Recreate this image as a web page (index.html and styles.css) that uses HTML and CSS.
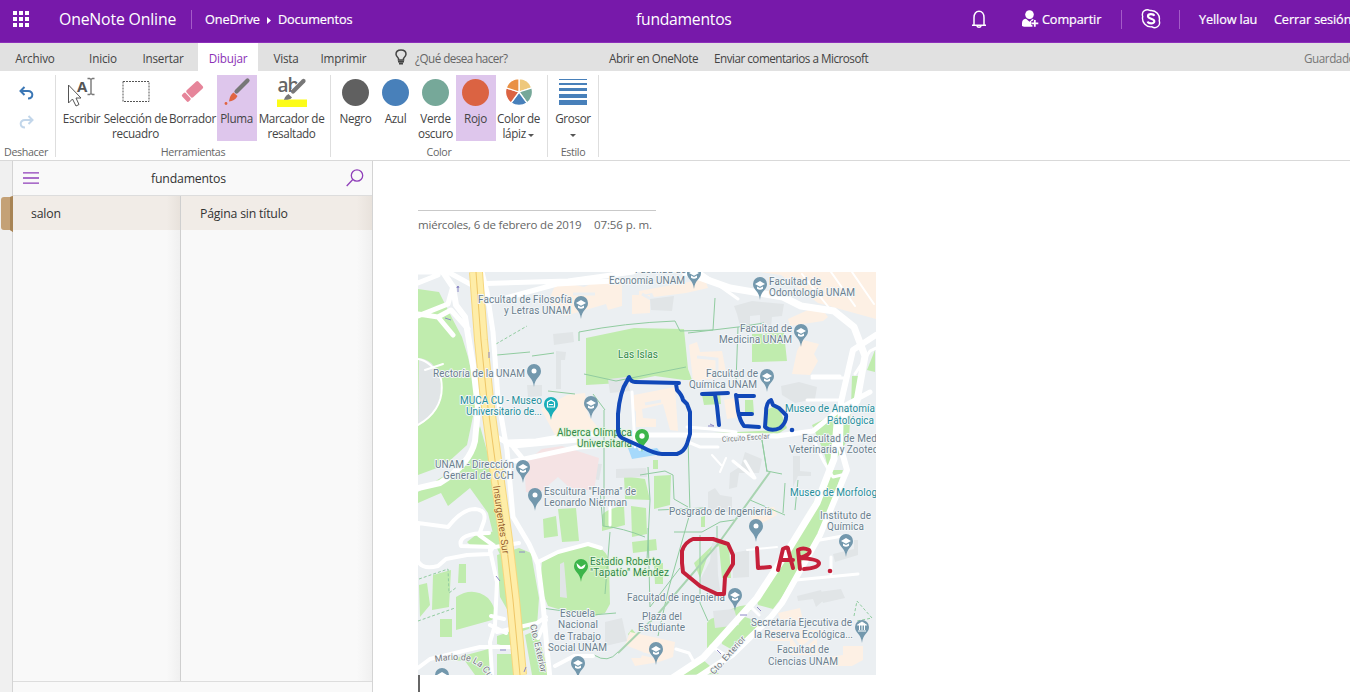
FILE: index.html
```html
<!DOCTYPE html>
<html lang="es">
<head>
<meta charset="utf-8">
<title>OneNote Online</title>
<link rel="stylesheet" href="styles.css">
</head>
<body>
<header class="topbar">
  <svg class="waffle" width="16" height="16" viewBox="0 0 16 16" fill="#fff"><path d="M0 0h4v4H0zM6 0h4v4H6zM12 0h4v4h-4zM0 6h4v4H0zM6 6h4v4H6zM12 6h4v4h-4zM0 12h4v4H0zM6 12h4v4H6zM12 12h4v4h-4z"/></svg>
  <span class="brand">OneNote Online</span>
  <i class="bar-sep"></i>
  <span class="crumb drive">OneDrive</span>
  <svg class="crumb-arrow" width="4" height="7" viewBox="0 0 4 7"><path d="M0 0l4 3.5L0 7z" fill="#fff"/></svg>
  <span class="crumb docs">Documentos</span>
  <span class="doc-title">fundamentos</span>
  <svg class="bell" width="16" height="19" viewBox="0 0 16 19" fill="none" stroke="#fff" stroke-width="1.5"><path d="M1 15.2h14M3 15V7.5C3 3.8 5 1.2 8 1.2s5 2.6 5 6.3V15M6 15.8c.3 1.8 3.700 1.800 4 0"/></svg>
  <svg class="person" width="17" height="18" viewBox="0 0 17 18"><circle cx="7.500" cy="4.600" r="4.300" fill="#fff"/><path d="M0 16v-3c0-3 2-4.300 4-4.300l3.500 3 3-3 2 1-2 3v4.100H2z" fill="#fff"/><path d="M12.800 9.500v7M9.300 13h7" stroke="#7719aa" stroke-width="4"/><path d="M12.800 10v6.800M9.500 13.400h6.800" stroke="#fff" stroke-width="1.800"/></svg>
  <span class="crumb share">Compartir</span>
  <i class="bar-sep"></i>
  <svg class="skype" width="20" height="20" viewBox="0 0 20 20" fill="none" stroke="#fff"><path d="M9 1.500C5.500-.5 0 2 1.700 7.500 .5 13 5 18.500 11 17.800c4 2.500 9-1.300 7.200-6C19.500 6 15 .8 9 1.500z" stroke-width="1.400"/><path d="M13.200 6.800C12.500 4.700 7 4.400 7 7.300c0 3 6.300 1.800 6.300 4.900 0 3-6 2.700-6.600.2" stroke-width="2.200"/></svg>
  <i class="bar-sep second"></i>
  <span class="crumb user">Yellow lau</span>
  <span class="crumb logout">Cerrar sesión</span>
</header>
<nav class="tabs">
  <span class="tab archivo">Archivo</span><span class="tab inicio">Inicio</span><span class="tab insertar">Insertar</span><span class="tab dibujar">Dibujar</span><span class="tab vista">Vista</span><span class="tab imprimir">Imprimir</span>
  <svg class="bulb" width="12" height="16" viewBox="0 0 12 16" fill="none" stroke="#444"><path d="M3.500 11V9.500C2 8 1 7 1 5.300 1 2.600 3.200 1 6 1s5 1.600 5 4.300C11 7 10 8 8.500 9.500V11z" stroke-width="1.500"/><path d="M3 12.700h6M4 14.700h4" stroke-width="1.700"/></svg>
  <span class="tell">¿Qué desea hacer?</span>
  <i class="tab-sep"></i>
  <span class="open">Abrir en OneNote</span>
  <span class="feedback">Enviar comentarios a Microsoft</span>
  <span class="saved">Guardado</span>
</nav>
<section class="ribbon">
  <div class="group undo">
    <div class="history">
      <svg width="15" height="14" viewBox="0 0 15 14" fill="none" stroke="#3b77b5" stroke-width="2"><path d="M5.500 1L1.500 5l4 4M2 5h7c6 0 5.500 7.500 0 7.500"/></svg>
      <svg width="15" height="14" viewBox="0 0 15 14" fill="none" stroke="#c2d6ea" stroke-width="2"><path d="M9.500 1l4 4-4 4M13 5H6c-6 0-5.500 7.500 0 7.500"/></svg>
    </div>
    <div class="caption">Deshacer</div>
  </div>
  <div class="group tools">
    <div class="buttons">
      <div class="btn w42"><svg class="type-icon" width="30" height="30" viewBox="0 0 30 30"><path d="M1.500 8v18l4-4 3.500 7 3-1.500-3-6.500h5z" fill="#fff" stroke="#555"/><text x="10" y="15" class="glyph-a">A</text><path d="M20.500 1.500h2l1.500 1 1.500-1h2M20.500 17.500h2l1.500-1 1.500 1h2M24 2.500v14" fill="none" stroke="#777" stroke-width="1.400"/></svg><span>Escribir</span></div>
      <div class="btn w66"><svg width="28" height="30" viewBox="0 0 28 30"><rect x="1" y="4.500" width="26" height="20" fill="none" stroke="#555" stroke-width="1" stroke-dasharray="2 1"/></svg><span>Selección de<br>recuadro</span></div>
      <div class="btn w48"><svg width="28" height="30" viewBox="0 0 28 30"><g transform="rotate(-43 14 15)" fill="#e6859a"><rect x="9" y="9.500" width="16" height="9.500" rx="1.500"/><rect x="3" y="9.500" width="5" height="9.500" rx="1.500"/></g></svg><span>Borrador</span></div>
      <div class="btn w40 active"><svg width="28" height="30" viewBox="0 0 28 30"><path d="M13.500 14.500L24.500 3.500" stroke="#777" stroke-width="4.200" stroke-linecap="round"/><path d="M10.500 15.500l4 3.500c-2 4-5 5-8.500 5.500 1-4 1-6.500 4.500-9z" fill="#e06542"/><circle cx="3" cy="26.500" r="1.400" fill="#e06542"/></svg><span>Pluma</span></div>
      <div class="btn w70"><svg width="32" height="30" viewBox="0 0 32 30"><rect x="1" y="22.500" width="30" height="7.500" fill="#fcfc18"/><text x="1.500" y="14.500" class="glyph-ab">ab</text><path d="M17 14.500L27.500 4" stroke="#fff" stroke-width="6"/><path d="M17 14.500L27.500 4" stroke="#777" stroke-width="4.200" stroke-linecap="round"/><path d="M12.500 17l3.500 3.500c-2 2.500-5 2-8 2.500 1-3 1.500-4 4.500-6z" fill="#777"/></svg><span>Marcador de<br>resaltado</span></div>
    </div>
    <div class="caption">Herramientas</div>
  </div>
  <div class="group colors">
    <div class="buttons">
      <div class="btn w40"><i class="dot negro"></i><span>Negro</span></div>
      <div class="btn w40"><i class="dot azul"></i><span>Azul</span></div>
      <div class="btn w40"><i class="dot verde"></i><span>Verde<br>oscuro</span></div>
      <div class="btn w40 active"><i class="dot rojo"></i><span>Rojo</span></div>
      <div class="btn w46"><svg width="28" height="30" viewBox="-14 -15 28 30" stroke="#fff" stroke-width="1.300"><path d="M0 0V-13.500A13.500 13.500 0 0 1 12.840-4.170z" fill="#eec87c"/><path d="M0 0L12.840-4.170A13.500 13.500 0 0 1 7.940 10.920z" fill="#76a899"/><path d="M0 0L7.940 10.920A13.500 13.500 0 0 1-7.940 10.920z" fill="#4880ba"/><path d="M0 0L-7.940 10.920A13.500 13.500 0 0 1-12.840-4.170z" fill="#db6342"/><path d="M0 0L-12.840-4.170A13.500 13.500 0 0 1 0-13.500z" fill="#e99145"/></svg><span>Color de<br>lápiz <b class="caret"></b></span></div>
    </div>
    <div class="caption">Color</div>
  </div>
  <div class="group style">
    <div class="buttons">
      <div class="btn w50"><svg width="28" height="30" viewBox="0 0 28 30" fill="#4880ba"><path d="M0 2h28v1H0zM0 6h28v2H0zM0 11h28v3H0zM0 17h28v4H0zM0 23h28v5H0z"/></svg><span>Grosor<br><b class="caret"></b></span></div>
    </div>
    <div class="caption">Estilo</div>
  </div>
</section>
<main class="workspace">
  <div class="edge"><svg class="section-mark" width="13" height="36" viewBox="0 0 13 36"><path d="M4 1h6l3-1v36l-3-2H4q-3 0-3-3V4q0-3 3-3z" fill="#c4a176"/><path d="M10 1l3-1v36l-3-2z" fill="#a88455"/></svg></div>
  <aside class="panel">
    <div class="panel-head">
      <svg width="16" height="12" viewBox="0 0 16 12"><path d="M0 .8h16M0 6h16M0 11.200h16" stroke="#8f3fb9" stroke-width="1.300"/></svg>
      <span>fundamentos</span>
      <svg width="18" height="18" viewBox="0 0 18 18" fill="none" stroke="#8f3fb9" stroke-width="1.300"><circle cx="11" cy="6.500" r="5.700"/><path d="M6.800 10.500L.7 17"/></svg>
    </div>
    <div class="columns">
      <div class="col sections"><div class="entry"><span>salon</span></div></div>
      <div class="col pages"><div class="entry"><span>Página sin título</span></div></div>
    </div>
  </aside>
  <article class="page">
    <div class="page-title"></div>
    <div class="stamp"><span class="date">miércoles, 6 de febrero de 2019</span><span class="time">07:56 p. m.</span></div>
    <svg class="map" width="458" height="403" viewBox="418 272 458 403">
      <defs>
        <g id="pin"><path d="M0 9C-1-1-7-.5-7-7A7 7 0 0 1 7-7C7-.5 1-1 0 9z"/></g>
        <g id="cap"><use href="#pin" fill="#7398ad"/><path d="M-5-7l5-3 5 3-5 2.700zM-3-4.600v2.300q3 2 6 0v-2.300L0-3z" fill="#fff"/></g>
        <g id="place"><use href="#pin" fill="#7398ad"/><circle cy="-7" r="2.500" fill="#fff"/></g>
      </defs>
      <rect x="418" y="272" width="458" height="403" fill="#ebeff2"/>
      <g fill="#c0ecae">
        <path d="M418 289l21 3 14 28 9 17 6 20 9 40-10 48-22 20-27 10z"/>
        <path d="M418 492l48-30 14-36 14 50 16 100-14-30-8-33-18-25-22 18-7-13-23 10z"/>
        <path d="M467 542l10-8 20-3 3 12-28 4zM497 555l22-7 12 5 8 45-2 28-17 6-20-35z"/>
        <path d="M419 585l8-2 3 22-10 12zM433 575l18-5-2 37-17 3zM459 564h7v19h-8zM456 597q17-11 32 1 11 13 4 22l-36 10zM440 619h12v18h-12z"/>
        <path d="M497 636l12-4 3 16-15-4zM448 660l44-12v27h-17l-10-14zM497 654h16l3 21h-19zM525 635l12-5 12 45h-17z"/>
        <path d="M586 338l48-10 50 1 4 40 4 11h-8l-29-4-34 7-35 2z"/>
        <path d="M542 561q27-19 52-15 15 4 15 19l1 39-5 9-17 5-40-12-8-20z"/>
        <path d="M543 519l13-3 2 20-14 2zM558 509l18-1 3 33-17 1zM602 515q6-7 22-9l1 19-23 6zM624 476l21 3 5 21-25-1zM631 506l15 2 1 26-15 3zM654 476l17-1-1 30-16 4zM632 542l24-3 1 11-24 3zM701 517l4-1v11h-4zM653 460h5v9h-5zM654 564l9-1v21h-8z"/>
        <path d="M752 334l32-1 3 28-35 1zM763 309h9v5h-9zM875 350v22l-8-2zM852 376h6l-1 30h-6zM702 395l18-2 1 11-17 1zM745 400h8l1 14-9 2zM766 410l12-5 9 23-9 6-11-2zM690 434l47-2 40-2-5 4-70 3z"/>
        <path d="M812 425l39-19-2 31-20 35-5-20zM832 470h11l-23 63-38 64-9 12-15-4-2-8 41-66zM707 623q4-7 15-5 8-12 25-13l4 5-44 39zM720 634l25-17 18 6-27 29-14-8zM679 675l22-17 18 16zM694 563l23-22 12 5 2 32h-9l-3-32-10 6-9 26zM628 634l4-5 6 7-7 3z"/>
      </g>
      <g fill="#fdf0e4">
        <path d="M760 272h116v47l-58-16-37-28zM554 288l8-6 22 5 16-7 22 1v25l-14 4-2-6-41 12-17-14zM639 291l66-12 3 9-22 5-32 4-2-4-13 3zM632 295l18 0v18l-18 1zM689 345l8-3 3 10 22-1 5 26-34 4zM788 319l31-14 9 12-5 4-33 5zM797 351l6-11 16 4-5 10 4 7-8 14-18-1z"/>
        <path d="M541 409l26-14 18-2 3 22 12 15-30 8-15-3zM634 395l41-8 3 44-8-1-7-26-21 5 1 9 13 1v8h-20v-15l-3-6zM724 400l14-3 3 20-14 2zM750 510l24-3 3 8-17 9-8-4z"/>
        <path d="M778 613l22-5 3 12-22 2zM770 630h55v8h-8v17h-27v-14h-20zM625 645l5-13 23 5 22 5-2 15-14 5-24 4-4-8h10l2-6zM843 646h20v14l-11 6h-29v-8l20-3z"/>
      </g>
      <g fill="none" stroke="#ebeff2" stroke-width="3"><path d="M573 294h22M642 294l14 8M697 357l20 2v14M645 404l16-3M639 653l17 4M789 632l12 17 13-11"/></g>
      <g fill="#e1e5e7">
        <path d="M734 306l18-5 32 3-2 12-10 1-1 10-11 1v-13l-10 1v13l-9 1-4-16zM553 334l20-2 1 10-20 3zM556 351l10 1-1 8h-4v29h-5zM608 379l19-2 3 14-20 2zM419 358q20 2 22 30-1 26-23 38zM650 299l24-3-2 15-21-1zM527 385h15v11l-14 1zM730 473l11-7 4-14 17 7-3 14-20 0-2 14-8 2zM781 386l18-4 18 5-2 12-20 4-13-8zM793 456h7v15l11 1v4h-13l-5 11zM708 492l7-4 5 7 12 2v15h-24z"/>
        <path d="M700 580l10-19 2-18h5l1 32 2 15-9 6-9-9zM732 553l17-3v27l-16 1zM713 611l21-2 5 16-24 3zM797 596l24-6 3 10-8 7-3-8-15 2zM819 592l22-3 4 9-22 5zM833 554l21-5v-9h4v15l-23 7z"/>
        <path d="M560 564l4-2 3 36-7-1zM605 622l17-4 5 23-22 5zM616 469l30-1 1 9-31 1zM571 468l13-5 18 1-3 16-28-4z"/>
      </g>
      <path d="M524 463l18-14 20-3 37 12-5 33-24-3-12-11-20 17-12-2z" fill="#f5e3e4"/>
      <path d="M628 448l8-3 3 6 18-3 5 6-30 5z" fill="#a6d9fb"/>
      <g fill="none" stroke="#91cca0" stroke-width="1">
        <path d="M497 355l33-3M532 356l22-3M579 341v-9q45-9 96-11l5 10 33-1 2-32M584 374l32 7 70-14M688 333l50-6 26-4M738 327l-2 55M575 394l-27-3M593 394l12 16M604 410v116M640 475l25-4 8 4 1 24 14 8M688 438l2 75-22 78-10 45M648 467l2 33-3 60M767 472l-6-38M761 434l6 37 15 3M750 500l35 15M785 483l-2 30M798 480l-3 30M674 532h28l18-10 14-2M700 535v68l8 18M717 543v-17M648 528l2 79 30-39M610 532l-5 62M600 490l3 36q20 2 42 11M658 510l46-2M542 608l50 7 24-2M594 655q14 9 24-3"/>
        <path d="M419 579l29-10 1 24 8-6M418 621l37-13" stroke-dasharray="3 2"/><path d="M496 344l31-18" stroke-dasharray="3 2"/><path d="M854 616l3-15 15 17-15 3" stroke-dasharray="3 2"/>
      </g>
      <path d="M618 653l40-39 60-70 52-72" fill="none" stroke="#a9d4b1" stroke-width="2"/>
      <g fill="none" stroke="#fff" stroke-linecap="round" stroke-linejoin="round">
        <path d="M443 272l10 15 3 18 9 12 8 48 5 43-3 33q-5 23-35 42l-22 5" stroke-width="6"/>
        <path d="M482 272l5 20 6 40 5 66 9 52 6 67 16 27 9 20 5 40 4 45 3 30" stroke-width="5"/>
        <path d="M418 314l20 3 13-7 17 19M418 316l30-12 5-18M418 272h30l22 12 98-3 65-9M418 283l20-8M487 303l70-19 75-4M438 317l15 18" stroke-width="5"/>
        <path d="M418 359q13 2 23 20 5 30-23 46M425 370l18-6" stroke-width="2"/>
        <path d="M418 523v38q4 9 20 5l8-7 21-4 22-1 4-7-32-1q-4-13 28-13M418 523l15 2 15 2q14-18 27-18 12 1 9 12l-5 14 14 10M495 547l24-4M491 616l13 3M497 632l40-9 9-6M506 633l-16-8M418 668l12-9 50-12h34M490 550l7 32-2 43-5 17 2 33M538 562l20-10 30-8 13 4M538 638l8-18M555 666l19-10 19 0" stroke-width="4"/>
        <path d="M493 435l20 11 65-6M506 463l73-16 40-3M507 442l29-1 41-7 70 1 30 0 100 1 36-5 31-25 26-14M514 448l9 11" stroke-width="5"/>
        <path d="M685 272l45 16 53 9 18 9 33 5 20 16 11 29-8 45-20 23-3 35-17 44-30 49-30 46-54 60-38 25" stroke-width="7"/>
        <path d="M876 335l-23 15-12 52-1 43 7 25-27 65-38 68-12 15-38 37-35 23" stroke-width="6"/>
        <path d="M855 374l15-23 6-3M812 378h33M812 376h28M807 400h33M812 437l12 25 9 15 13-3M676 649l13 4 6 11M749 605l10 10M711 646l13 8M796 580l62-6M820 540l23-4M831 557v17M733 461l21 17M745 461l10 17M700 272l38 27M632 392l3 55M687 427l24 2 25 3M688 442l12 5h18M610 500v25" stroke-width="3"/>
        <path d="M802 274l28 35M831 272l24 34M852 272l22 32M712 455l9 10M720 472l6-14M747 550l30-3" stroke-width="2"/>
      </g>
      <path d="M476 272l5 68 6 60 8 60 11 80 7 60 7 75" fill="none" stroke="#f6d77d" stroke-width="14"/>
      <path d="M476 272l5 68 6 60 8 60 11 80 7 60 7 75" fill="none" stroke="#feeda8" stroke-width="12"/>
      <path d="M476 272l5 68 6 60 8 60 11 80 7 60 7 75" fill="none" stroke="#efc666" stroke-width="1"/>
      <g class="arrows" fill="none" stroke="#8c88c6"><path d="M458 292v-6l-1 2 1-2 1 2M445 318l6 2M489 358v-6M500 650h6M519 552h6M496 576l4 5M708 426h6l-4-2M740 615h7M757 607l4 4M717 650l4 4M524 672l2-5"/></g>
      <g class="label">
        <text x="609" y="284" textLength="76">Economía UNAM</text><text x="635" y="273" textLength="51">Facultad de</text>
        <text x="769" y="285" textLength="52">Facultad de</text><text x="769" y="296" textLength="86">Odontología UNAM</text>
        <text x="478" y="303" textLength="94">Facultad de Filosofía</text><text x="504" y="314" textLength="67">y Letras UNAM</text>
        <text x="740" y="332" textLength="52">Facultad de</text><text x="719" y="343" textLength="73">Medicina UNAM</text>
        <text x="433" y="377" textLength="92">Rectoría de la UNAM</text>
        <text x="706" y="377" textLength="52">Facultad de</text><text x="689" y="388" textLength="68">Química UNAM</text>
        <text x="802" y="442" textLength="75">Facultad de Med</text><text x="789" y="453" textLength="89">Veterinaria y Zootec</text>
        <text x="435" y="468" textLength="79">UNAM - Dirección</text><text x="443" y="479" textLength="71">General de CCH</text>
        <text x="544" y="495" textLength="92">Escultura "Flama" de</text><text x="544" y="506" textLength="83">Leonardo Nierman</text>
        <text x="669" y="515" textLength="103">Posgrado de Ingeniería</text><text x="820" y="519" textLength="51">Instituto de</text><text x="827" y="530" textLength="37">Química</text>
        <text x="627" y="601" textLength="98">Facultad de ingeniería</text><text x="560" y="617" textLength="35">Escuela</text><text x="558" y="628" textLength="40">Nacional</text><text x="554" y="640" textLength="47">de Trabajo</text><text x="548" y="651" textLength="59">Social UNAM</text>
        <text x="642" y="620" textLength="40">Plaza del</text><text x="638" y="631" textLength="47">Estudiante</text>
        <text x="751" y="626" textLength="101">Secretaría Ejecutiva de</text><text x="754" y="638" textLength="99">la Reserva Ecológica...</text><text x="777" y="653" textLength="52">Facultad de</text><text x="768" y="665" textLength="70">Ciencias UNAM</text>
      </g>
      <g class="label road"><path id="mario" d="M435 662Q463 657 475 664T490 684"/><text><textPath href="#mario">Mario de La Cueva</textPath></text><text transform="translate(530 625) rotate(77)" textLength="49">Cto. Exterior</text><text transform="translate(714 675) rotate(-48)" textLength="48">Cto. Exterior</text><text class="small" transform="translate(722 442) rotate(-4)" textLength="48">Circuito Escolar</text></g>
      <text class="label highway" transform="translate(493 486) rotate(82)" textLength="69">Insurgentes Sur</text>
      <g class="label teal"><text x="460" y="404" textLength="82">MUCA CU - Museo</text><text x="466" y="415" textLength="76">Universitario de...</text><text x="785" y="412" textLength="90">Museo de Anatomía</text><text x="827" y="424" textLength="47">Patológica</text><text x="790" y="496" textLength="87">Museo de Morfolog</text></g>
      <g class="label green"><text x="618" y="358" textLength="40">Las Islas</text><text x="557" y="436" textLength="75">Alberca Olímpica</text><text x="577" y="447" textLength="55">Universitaria</text><text x="590" y="565" textLength="71">Estadio Roberto</text><text x="590" y="576" textLength="79">"Tapatío" Méndez</text></g>
      <use href="#cap" x="581" y="310"/><use href="#cap" x="694" y="280"/><use href="#cap" x="760" y="291"/><use href="#cap" x="801" y="338"/><use href="#cap" x="767" y="383"/><use href="#cap" x="591" y="410"/><use href="#cap" x="523" y="474"/><use href="#cap" x="846" y="548"/><use href="#cap" x="735" y="602"/><use href="#cap" x="578" y="670"/><use href="#cap" x="656" y="656"/><use href="#cap" x="442" y="682"/>
      <use href="#place" x="534" y="378"/><use href="#place" x="535" y="502"/><use href="#place" x="756" y="533"/>
      <use href="#pin" x="551" y="411" fill="#19aeb9"/><path d="M547.500 402l3.500-2 3.500 2v5h-7zM549 404.500h4" fill="none" stroke="#fff" stroke-width="1.200"/>
      <use href="#pin" x="862" y="634" fill="#7398ad"/><path d="M857.500 625l4.500-3 4.500 3zM858 631h8M859.500 625v5M862 625v5M864.500 625v5" stroke="#fff" fill="#fff"/>
      <use href="#pin" x="642" y="443" fill="#3cb54a"/><circle cx="642" cy="436" r="2.700" fill="#fff"/>
      <use href="#pin" x="581" y="573" fill="#3cb54a"/><path d="M576.500 563l4.500 4 4.500-3q-.5 5-4.500 5t-4.500-6z" fill="#fff"/>
      <g class="ink blue"><path d="M679 383l-44-1q-4 0-6-5l-2 4q-7 10-9 33v17q0 4 4 7l20 9q13 7 20 7h15q7-2 10-10l3-10v-22l-3-8-4-4q-1-5-6-10l-1-6M702 394l26-1M715 395l2 11 2 19M737 396h17M736 395l2 16q2 10 6 15l15 1M740 414h12M766 413l-1 14q6 5 15 1 7-6 6-13l-7-7-6-3-2-5q-5 2-5 13"/><circle cx="792" cy="430" r="2.300"/></g>
      <g class="ink red"><path d="M682 563v-12q3-9 11-12h20l15 5 5 11v9l-8 13-1 17h-7l-17-8-17-14zM757 548l1 20 12-1M778 570l5-21q5-3 5 0l5 19M781 560h12M800 569l-2-19q5-3 11 0 3 4-9 8 18 1 19 5 0 5-15 6"/><circle cx="830" cy="571" r="2.300"/></g>
    </svg>
    <i class="cursor"></i>
  </article>
</main>
</body>
</html>
```
FILE: styles.css
```css
* { box-sizing: border-box; }
body { margin: 0; width: 1350px; height: 692px; overflow: hidden; background: #fff; color: #444; font-family: "Open Sans", "Noto Sans", sans-serif; font-size: 11.7px; letter-spacing: -.3px; }
svg { display: block; flex: none; }
span { white-space: nowrap; }
.topbar { height: 43px; display: flex; align-items: center; background: #7719aa; border-bottom: 1px solid #8c2fba; color: #fff; padding: 0 0 4px 13px; overflow: hidden; }
.topbar span { flex: none; }
.brand { width: 117px; margin-left: 30px; font-size: 15.800px; letter-spacing: -.16px; }
.bar-sep { flex: none; width: 1px; height: 19px; background: #a45bc8; margin-left: 15px; }
.crumb { font-size: 12.700px; letter-spacing: -.12px; -webkit-text-stroke: .2px #fff; }
.drive { width: 56px; margin-left: 13px; }
.crumb-arrow { margin: 2px 7px 0 6px; }
.docs { width: 75px; }
.doc-title { width: 96px; margin-left: 283px; font-size: 15.700px; letter-spacing: -.25px; }
.bell { margin-left: 239px; }
.person { margin-left: 35px; }
.share { width: 61px; margin-left: 3px; }
.topbar .share + .bar-sep { margin-left: 18px; }
.skype { margin-left: 19px; }
.topbar .second { margin-left: 18px; }
.user { width: 60px; margin-left: 19px; }
.logout { margin-left: 15px; }
.tabs { height: 28px; display: flex; align-items: center; background: #e1e1e1; overflow: hidden; }
.tabs span { flex: none; line-height: 28px; padding-top: 1px; }
.tab { text-align: center; letter-spacing: -.2px; }
.archivo { width: 70px; }
.inicio { width: 66px; }
.insertar { width: 54px; }
.tab.dibujar { width: 60px; margin-left: 8px; background: #fff; color: #8b32b6; }
.vista { width: 56px; }
.imprimir { width: 59px; }
.bulb { margin-left: 22px; }
.tell { width: 96px; margin-left: 8px; color: #666; letter-spacing: -.55px; }
.tab-sep { width: 1px; height: 15px; margin-left: 87px; background: #c6c6c6; }
.open { width: 90px; margin-left: 11px; letter-spacing: -.45px; }
.feedback { width: 157px; margin-left: 15px; letter-spacing: -.5px; }
.saved { margin-left: 433px; color: #777; letter-spacing: -.45px; }
.ribbon { display: flex; height: 90px; padding-top: 4px; border-bottom: 1px solid #d9d9d9; }
.group { height: 82px; border-right: 1px solid #dedede; display: flex; flex-direction: column; justify-content: space-between; }
.undo { width: 56px; }
.tools { width: 275px; }
.colors { width: 217px; }
.style { width: 51px; }
.buttons { display: flex; padding-left: 4.500px; }
.style .buttons { padding-left: 0; }
.caption { text-align: center; font-size: 10.700px; line-height: 11px; color: #666; letter-spacing: -.35px; position: relative; top: 1px; }
.undo .caption { padding-right: 3px; }
.history { padding: 11px 0 0 19px; display: flex; flex-direction: column; gap: 15px; }
.btn { flex: none; height: 66px; padding-top: 2px; display: flex; flex-direction: column; align-items: center; text-align: center; }
.btn span { margin-top: 4px; line-height: 14.500px; letter-spacing: -.35px; }
.active { background: #dec6ec; }
.w40 { width: 40px; }
.w42 { width: 42px; }
.w46 { width: 46px; }
.w48 { width: 48px; }
.w50 { width: 50px; }
.w66 { width: 66px; }
.w70 { width: 70px; }
.glyph-a { font: bold 15px "Open Sans", sans-serif; fill: #555; letter-spacing: 0; }
.glyph-ab { font: 600 19px "Open Sans", sans-serif; fill: #666; letter-spacing: -1px; }
.dot { width: 27px; height: 27px; margin: 2px 0 1px; border-radius: 50%; }
.negro { background: #606060; }
.azul { background: #4880ba; }
.verde { background: #76a899; }
.rojo { background: #db6342; }
.caret { display: inline-block; border: 3px solid transparent; border-top-color: #555; border-bottom: 0; vertical-align: 1px; }
.workspace { display: flex; height: 531px; }
.edge { width: 13px; padding-top: 35px; background: #f0f0f0; border-right: 1px solid #d4d4d4; }
.panel { width: 360px; display: flex; flex-direction: column; background: #f9f9f9; border-right: 1px solid #d4d4d4; font-size: 12.300px; letter-spacing: -.2px; color: #333; }
.panel-head { height: 35px; display: flex; align-items: center; justify-content: space-between; padding: 0 8px 0 10px; border-bottom: 1px solid #ddd; }
.panel-head span { margin-right: 8px; }
.columns { display: flex; height: 486px; border-bottom: 1px solid #ddd; }
.col { background: linear-gradient(to right, transparent 92%, #f0f0f0); }
.sections { width: 168px; border-right: 1px solid #cfcfcf; }
.pages { width: 191px; }
.entry { height: 34px; line-height: 36px; padding-left: 18px; background: linear-gradient(to right, #f1ece7 92%, #e8e2dc); }
.pages .entry { padding-left: 19px; }
.page { width: 977px; padding: 49px 0 0 45px; }
.page-title { width: 238px; border-top: 1px solid #c9c9c9; }
.stamp { height: 61px; padding-top: 5px; font-size: 11.500px; line-height: 17px; color: #666; display: flex; letter-spacing: -.21px; }
.date { width: 176px; }
.time { letter-spacing: -.1px; }
.cursor { display: block; width: 2px; height: 17px; background: #666; }
.label { font: 10px Roboto, sans-serif; letter-spacing: 0; fill: #6b7f8e; stroke: #f4f7f9; stroke-width: 1.800px; paint-order: stroke; stroke-linejoin: round; }
.road { fill: #74797d; font-size: 9px; }
.road path { fill: none; stroke: none; }
.small { font-size: 7.500px; }
.highway { fill: #985f2c; stroke: #feeda8; font-size: 10px; }
.teal { fill: #258e9b; }
.green { fill: #32884a; stroke: #e3f6dd; }
.ink { fill: none; stroke-width: 4; stroke-linecap: round; stroke-linejoin: round; }
.blue { stroke: #1148b8; }
.red { stroke: #c5203a; }
.blue circle { fill: #1148b8; stroke: none; }
.red circle { fill: #c5203a; stroke: none; }
```
